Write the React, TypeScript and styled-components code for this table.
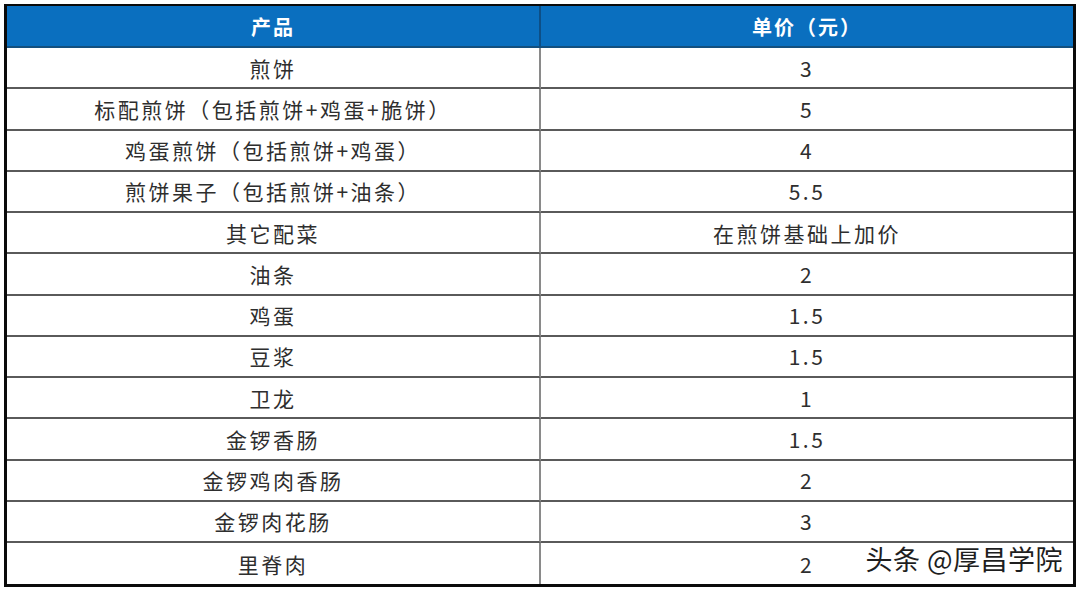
import { FunctionComponent } from 'react';
import styled, { createGlobalStyle } from 'styled-components';

const GlobalStyle = createGlobalStyle`
    html, body {
        margin: 0;
        padding: 0;
        background: #ffffff;
    }
    body {
        font-family: 'Noto Sans CJK SC', 'Noto Sans', sans-serif;
    }
`;

const Frame = styled.div`
    position: relative;
    width: 1080px;
    height: 591px;
    padding: 4px 4px 0 4px;
    box-sizing: border-box;
    overflow: hidden;
`;

const Table = styled.div`
    width: 1072px;
    border: 3px solid #0a0a0a;
    border-top-width: 2px;
    box-sizing: border-box;
    display: grid;
    grid-template-columns: 534px 1fr;
`;

const HeaderCell = styled.div<{ $last?: boolean }>`
    height: 40px;
    display: flex;
    align-items: center;
    justify-content: center;
    background: #0a6fbf;
    color: #ffffff;
    font-weight: 700;
    font-size: 20px;
    letter-spacing: 2px;
    border-bottom: 2px solid #13507f;
    border-right: ${(p) => (p.$last ? 'none' : '2px solid #0d4f86')};
`;

const Cell = styled.div<{ $last?: boolean; $end?: boolean }>`
    height: ${(p) => (p.$end ? '41.25px' : '39.25px')};
    display: flex;
    align-items: center;
    justify-content: center;
    color: #2e2e2e;
    font-size: 21px;
    letter-spacing: 2.5px;
    border-bottom: ${(p) => (p.$end ? 'none' : '2px solid #5a5a5a')};
    border-right: ${(p) => (p.$last ? 'none' : '2px solid #8a8a8a')};
`;

const Watermark = styled.div`
    position: absolute;
    right: 17px;
    bottom: 13px;
    font-size: 27px;
    color: #1e1e1e;
    letter-spacing: 0.5px;
    text-shadow: 1px 1px 0 #ffffff, -1px -1px 0 #ffffff, 1px -1px 0 #ffffff, -1px 1px 0 #ffffff;
`;

const rows: [string, string][] = [
    ['煎饼', '3'],
    ['标配煎饼（包括煎饼+鸡蛋+脆饼）', '5'],
    ['鸡蛋煎饼（包括煎饼+鸡蛋）', '4'],
    ['煎饼果子（包括煎饼+油条）', '5.5'],
    ['其它配菜', '在煎饼基础上加价'],
    ['油条', '2'],
    ['鸡蛋', '1.5'],
    ['豆浆', '1.5'],
    ['卫龙', '1'],
    ['金锣香肠', '1.5'],
    ['金锣鸡肉香肠', '2'],
    ['金锣肉花肠', '3'],
    ['里脊肉', '2'],
];

const App: FunctionComponent = () => {
    return (
        <>
            <GlobalStyle />
            <Frame>
                <Table>
                    <HeaderCell>产品</HeaderCell>
                    <HeaderCell $last>单价（元）</HeaderCell>
                    {rows.map(([name, price], i) => {
                        const end = i === rows.length - 1;
                        return [
                            <Cell key={`n${i}`} $end={end}>
                                {name}
                            </Cell>,
                            <Cell key={`p${i}`} $last $end={end}>
                                {price}
                            </Cell>,
                        ];
                    })}
                </Table>
                <Watermark>头条 @厚昌学院</Watermark>
            </Frame>
        </>
    );
};

export default App;
